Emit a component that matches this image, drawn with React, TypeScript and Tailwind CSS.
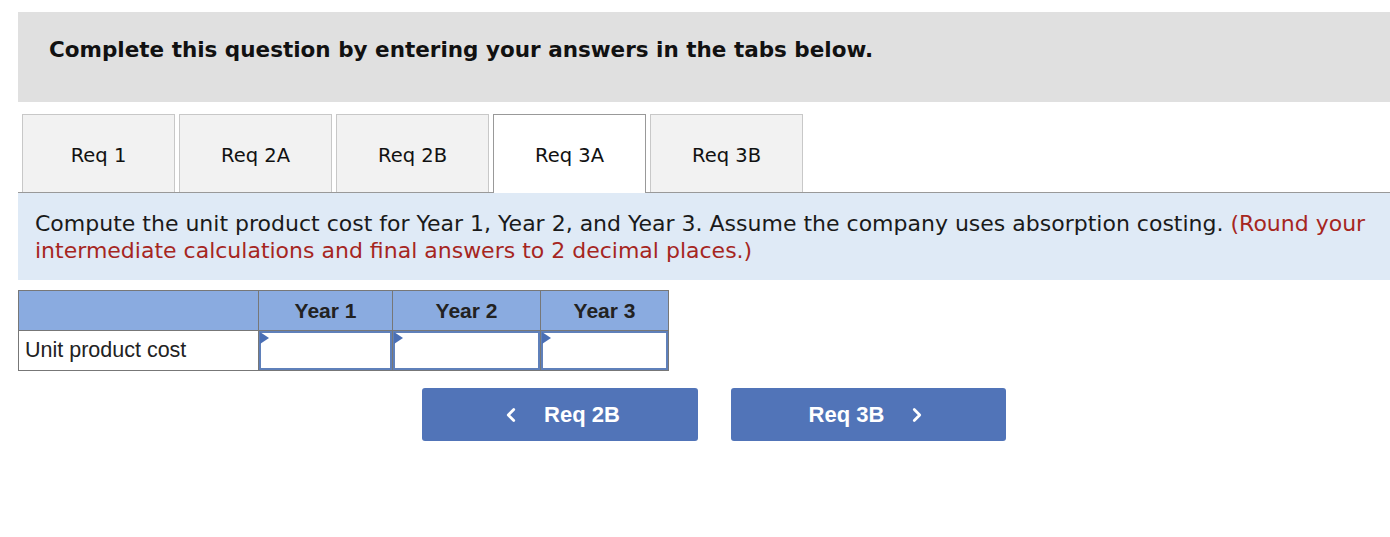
import { ChevronLeft, ChevronRight } from 'lucide-react';

const tabs = ['Req 1', 'Req 2A', 'Req 2B', 'Req 3A', 'Req 3B'];
const active = 'Req 3A';

function InputCell({ w }: { w: string }) {
  return (
    <td className={`${w} border border-[#777] p-0`}>
      <div className="relative h-[39px] border-2 border-[#5f80ba] bg-white">
        <span className="absolute -left-[1px] -top-[1px] h-0 w-0 border-y-[6px] border-l-[9px] border-y-transparent border-l-[#4a6fb5]" />
      </div>
    </td>
  );
}

export default function App() {
  return (
    <div className="min-h-[537px] bg-white pt-3 pl-[18px] [font-family:'DejaVu_Sans',Verdana,sans-serif] text-[#111]">
      <div className="flex h-[90px] items-center bg-[#e0e0e0] pl-[31px] pb-[14px]">
        <h1 className="text-[21.5px] font-bold">Complete this question by entering your answers in the tabs below.</h1>
      </div>

      <div className="mt-3 flex gap-[4px] border-b border-[#999] pl-1">
        {tabs.map((t) =>
          t === active ? (
            <div
              key={t}
              className="-mb-px flex h-[79px] w-[153px] items-center justify-center border border-b-0 border-[#999] bg-white pt-[4px] text-[19.5px]"
            >
              {t}
            </div>
          ) : (
            <div
              key={t}
              className="flex h-[78px] w-[153px] items-center justify-center border border-b-0 border-[#c8c8c8] bg-[#f2f2f2] pt-[4px] text-[19.5px]"
            >
              {t}
            </div>
          )
        )}
      </div>

      <div className="bg-[#dfeaf6] pl-[17px] pr-[20px] pt-[17px] pb-[16px] text-[22px] leading-[27px] text-[#1a1a1a]">
        Compute the unit product cost for Year 1, Year 2, and Year 3. Assume the company uses absorption costing.{' '}
        <span className="text-[#a6261f]">(Round your intermediate calculations and final answers to 2 decimal places.)</span>
      </div>

      <table className="mt-[10px] border-collapse [font-family:'Liberation_Sans',Arial,sans-serif]">
        <thead>
          <tr className="h-[40px] bg-[#8aabe0] text-[21px]">
            <th className="w-[240px] border border-[#777]" />
            <th className="w-[134px] border border-[#777] font-bold text-[#222]">Year 1</th>
            <th className="w-[148px] border border-[#777] font-bold text-[#222]">Year 2</th>
            <th className="w-[128px] border border-[#777] font-bold text-[#222]">Year 3</th>
          </tr>
        </thead>
        <tbody>
          <tr className="h-[40px]">
            <td className="border border-[#777] pl-[6px] text-left text-[21.5px] text-[#222]">Unit product cost</td>
            <InputCell w="w-[134px]" />
            <InputCell w="w-[148px]" />
            <InputCell w="w-[128px]" />
          </tr>
        </tbody>
      </table>

      <div className="mt-[17px] flex gap-[33px] pl-[404px] [font-family:'Liberation_Sans',Arial,sans-serif]">
        <button className="flex h-[53px] w-[276px] items-center justify-center gap-[22px] rounded-[3px] bg-[#5174b8] text-[22px] font-bold text-white">
          <ChevronLeft size={22} strokeWidth={3} />
          <span>Req 2B</span>
        </button>
        <button className="flex h-[53px] w-[275px] items-center justify-center gap-[22px] rounded-[3px] bg-[#5174b8] text-[22px] font-bold text-white">
          <span>Req 3B</span>
          <ChevronRight size={22} strokeWidth={3} />
        </button>
      </div>
    </div>
  );
}
